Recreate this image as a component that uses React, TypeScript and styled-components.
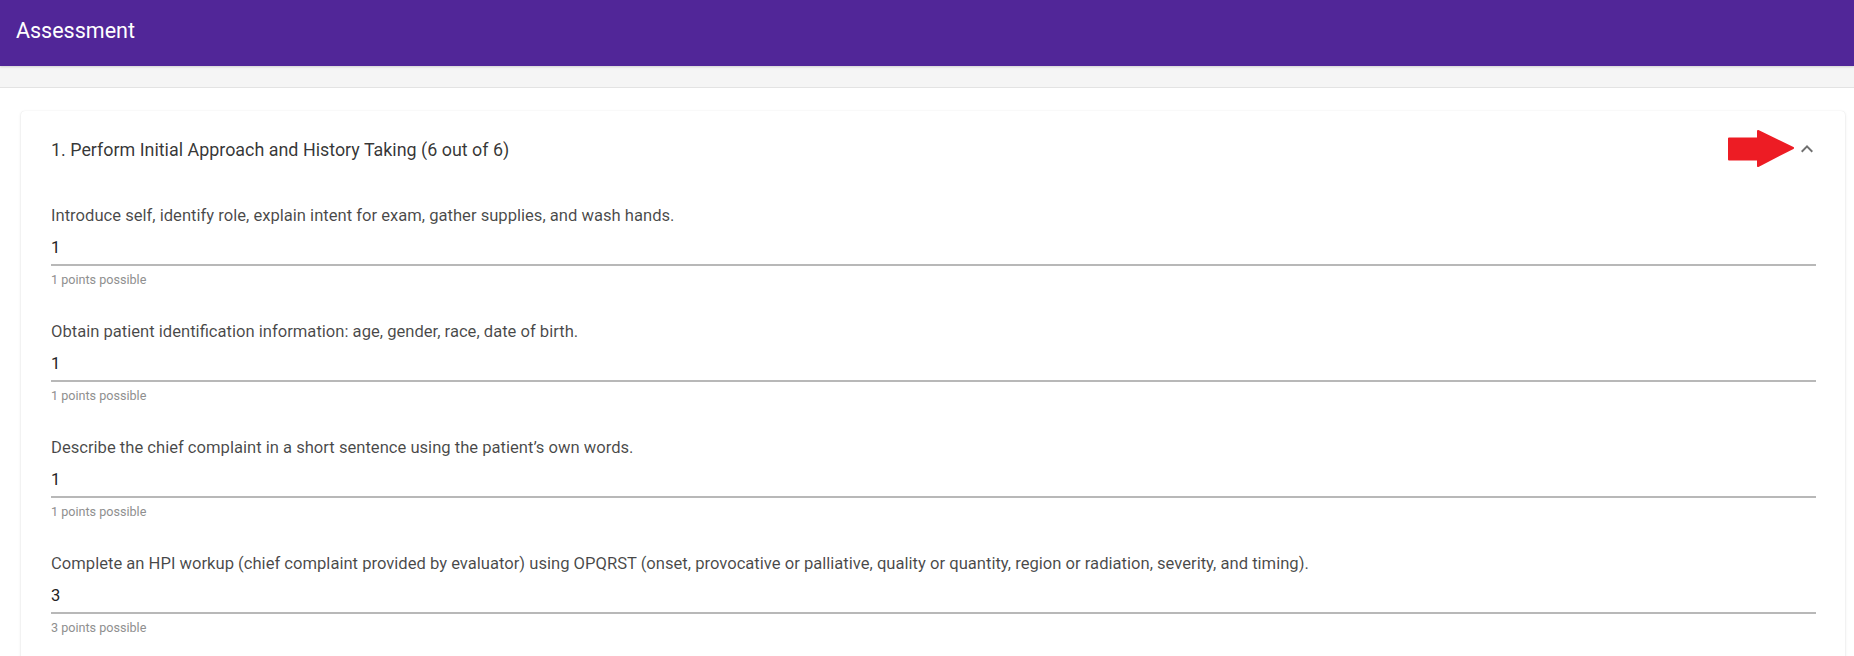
import React from "react";
import styled, { createGlobalStyle } from "styled-components";

interface Item {
  label: string;
  value: number;
  possible: number;
}

const items: Item[] = [
  {
    label:
      "Introduce self, identify role, explain intent for exam, gather supplies, and wash hands.",
    value: 1,
    possible: 1,
  },
  {
    label: "Obtain patient identification information: age, gender, race, date of birth.",
    value: 1,
    possible: 1,
  },
  {
    label: "Describe the chief complaint in a short sentence using the patient’s own words.",
    value: 1,
    possible: 1,
  },
  {
    label:
      "Complete an HPI workup (chief complaint provided by evaluator) using OPQRST (onset, provocative or palliative, quality or quantity, region or radiation, severity, and timing).",
    value: 3,
    possible: 3,
  },
];

const App = () => {
  return (
    <>
      <GlobalStyle />
      <Header>
        <HeaderTitle>Assessment</HeaderTitle>
      </Header>
      <SubBar />
      <Content>
        <Card>
          <CardHeader>
            <CardTitle>1. Perform Initial Approach and History Taking (6 out of 6)</CardTitle>
            <Pointer width="68" height="40" viewBox="0 0 68 40">
              <path
                d="M2 9.5 H31 V2 L66 19 L31 37 V30.5 H2 Z"
                fill="#ed1c24"
                stroke="#ed1c24"
                strokeWidth="2"
                strokeLinejoin="round"
              />
            </Pointer>
            <Chevron width="24" height="24" viewBox="0 0 24 24">
              <path d="M12 8l-6 6 1.41 1.41L12 10.83l4.59 4.58L18 14z" fill="#707070" />
            </Chevron>
          </CardHeader>
          <List>
            {items.map((el, i) => (
              <Row key={i}>
                <Label>{el.label}</Label>
                <Value>{el.value}</Value>
                <Helper>{el.possible} points possible</Helper>
              </Row>
            ))}
          </List>
        </Card>
      </Content>
    </>
  );
};

export default App;

const GlobalStyle = createGlobalStyle`
  html, body {
    margin: 0;
    padding: 0;
    overflow: hidden;
    background: #fff;
    font-family: Roboto, "Liberation Sans", Arial, sans-serif;
  }
`;

const Header = styled.header`
  height: 66px;
  background: #512698;
  display: flex;
  align-items: center;
  padding: 0 0 6px 16px;
  box-sizing: border-box;
  box-shadow: 0 1px 2px rgba(0, 0, 0, 0.15);
  position: relative;
  z-index: 1;
`;

const HeaderTitle = styled.h1`
  margin: 0;
  color: #fff;
  font-size: 21.5px;
  font-weight: 400;
`;

const SubBar = styled.div`
  height: 21px;
  background: #f5f5f5;
  border-bottom: 1px solid #e3e3e3;
`;

const Content = styled.main`
  padding: 23px 9px 0 21px;
`;

const Card = styled.section`
  background: #fff;
  border-radius: 4px;
  box-shadow: 0 1px 3px rgba(0, 0, 0, 0.13), 0 0 1px rgba(0, 0, 0, 0.1);
  padding-bottom: 60px;
`;

const CardHeader = styled.div`
  height: 76px;
  display: flex;
  align-items: center;
  padding: 0 26px 0 30px;
  position: relative;
`;

const CardTitle = styled.div`
  flex: 1;
  font-size: 17.9px;
  color: rgba(0, 0, 0, 0.8);
`;

const Pointer = styled.svg`
  position: absolute;
  right: 50px;
  top: 18px;
`;

const Chevron = styled.svg`
  display: block;
`;

const List = styled.div`
  padding: 0 29px 0 30px;
`;

const Row = styled.div`
  padding: 18px 0 15px;
`;

const Label = styled.div`
  font-size: 16.6px;
  line-height: 22px;
  color: rgba(0, 0, 0, 0.72);
`;

const Value = styled.div`
  margin-top: 9px;
  height: 28px;
  box-sizing: content-box;
  font-size: 16.5px;
  line-height: 24px;
  color: #222;
  border-bottom: 2px solid #b8b8b8;
`;

const Helper = styled.div`
  margin-top: 6px;
  font-size: 12.6px;
  line-height: 16px;
  color: #8f8f8f;
`;
